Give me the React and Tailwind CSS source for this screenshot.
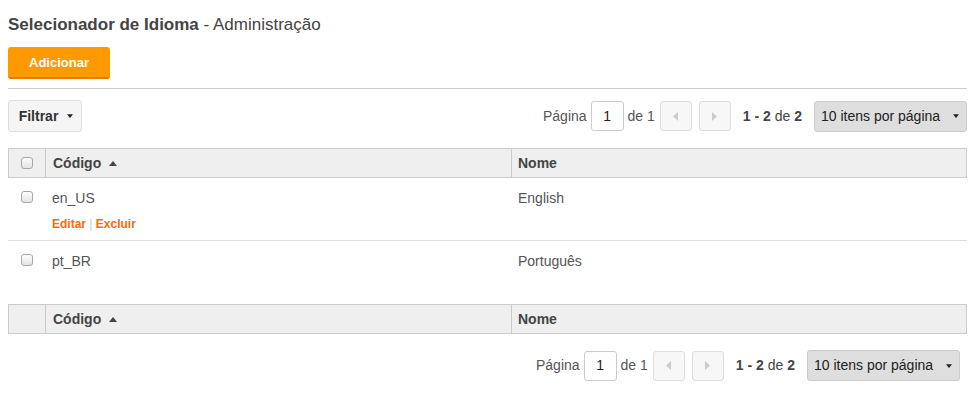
import React from "react";

const ROWS = [
  { codigo: "en_US", nome: "English", actions: true },
  { codigo: "pt_BR", nome: "Português", actions: false },
];

function Check() {
  return (
    <span className="inline-block w-[12px] h-[12px] rounded-[3px] border border-[#a8a8a8] bg-gradient-to-b from-[#fdfdfd] to-[#e4e4e4]" />
  );
}

function Caret({ up, small }) {
  if (up) {
    return (
      <svg width="8" height="5" viewBox="0 0 8 5" className="inline-block">
        <path d="M0 5 L4 0 L8 5 Z" fill="#444" />
      </svg>
    );
  }
  return (
    <svg width={small ? 6 : 7} height={small ? 4 : 5} viewBox="0 0 8 5" className="inline-block">
      <path d="M0 0 L8 0 L4 5 Z" fill="#222" />
    </svg>
  );
}

function Pager() {
  return (
    <div className="flex items-center text-[14px] text-[#555]">
      <span>Página</span>
      <div className="ml-[4px] w-[33px] h-[30px] border border-[#ccc] rounded-[3px] bg-white flex items-center justify-center text-[#222]">1</div>
      <span className="ml-[4px]">de 1</span>
      <button className="ml-[5px] w-[32px] h-[30px] border border-[#ddd] rounded-[3px] bg-[#f7f7f7] flex items-center justify-center">
        <svg width="5" height="9" viewBox="0 0 5 9"><path d="M5 0 L0 4.5 L5 9 Z" fill="#ccc" /></svg>
      </button>
      <button className="ml-[7px] w-[32px] h-[30px] border border-[#ddd] rounded-[3px] bg-[#f7f7f7] flex items-center justify-center">
        <svg width="5" height="9" viewBox="0 0 5 9"><path d="M0 0 L5 4.5 L0 9 Z" fill="#ccc" /></svg>
      </button>
      <span className="ml-[12px] text-[#444]"><b>1 - 2</b> de <b>2</b></span>
      <div className="ml-[12px] w-[153px] h-[31px] border border-[#ccc] rounded-[3px] bg-[#dedede] flex items-center justify-between pl-[6px] pr-[7px] text-[#222]">
        <span>10 itens por página</span>
        <Caret small />
      </div>
    </div>
  );
}

function HeadRow({ withCheck }) {
  return (
    <div className="flex h-[30px] bg-[#efefef] border border-[#ccc] text-[14px] font-bold text-[#444]">
      <div className="w-[36px] flex items-center justify-center">{withCheck && <Check />}</div>
      <div className="w-[466px] border-l border-[#ccc] flex items-center pl-[7px] gap-[8px]">
        Código <Caret up />
      </div>
      <div className="flex-1 border-l border-[#ccc] flex items-center pl-[6px]">Nome</div>
    </div>
  );
}

export default function App() {
  return (
    <div className="px-[8px] pt-[14px] pb-[20px] font-['Liberation_Sans',Arial,sans-serif] text-[#555] bg-white">
      <h1 className="text-[17px] leading-[22px] text-[#444]">
        <b>Selecionador de Idioma</b> - Administração
      </h1>
      <button className="mt-[11px] w-[102px] h-[32px] rounded-[3px] bg-[#ff9900] border-b-2 border-[#e97a00] text-white text-[13px] font-bold pt-[1px]">
        Adicionar
      </button>
      <div className="mt-[9px] border-t border-[#ccc]" />

      <div className="mt-[11px] flex items-center justify-between">
        <button className="w-[74px] h-[32px] border border-[#ddd] rounded-[3px] bg-[#f5f5f5] text-[14px] font-bold text-[#333] flex items-center justify-center gap-[9px] pl-[2px]">
          Filtrar <Caret small />
        </button>
        <Pager />
      </div>

      <div className="mt-[16px]">
        <HeadRow withCheck />
        {ROWS.map((r, i) => (
          <div key={r.codigo} className={`flex text-[14px] ${i === 0 ? "h-[63px] border-b border-[#ddd]" : "h-[45px]"}`}>
            <div className="w-[37px] flex justify-center pt-[13px]"><Check /></div>
            <div className="w-[466px] pl-[7px] pt-[12px]">
              <div className="leading-[17px]">{r.codigo}</div>
              {r.actions && (
                <div className="mt-[10px] text-[12px] font-bold text-[#ff6a00] leading-[15px]">
                  Editar <span className="font-normal text-[#ccc]">|</span> Excluir
                </div>
              )}
            </div>
            <div className="flex-1 pl-[7px] pt-[12px] leading-[17px]">{r.nome}</div>
          </div>
        ))}
        <div className="mt-[18px]">
          <HeadRow />
        </div>
      </div>

      <div className="mt-[16px] flex justify-end pr-[7px]">
        <Pager />
      </div>
    </div>
  );
}
